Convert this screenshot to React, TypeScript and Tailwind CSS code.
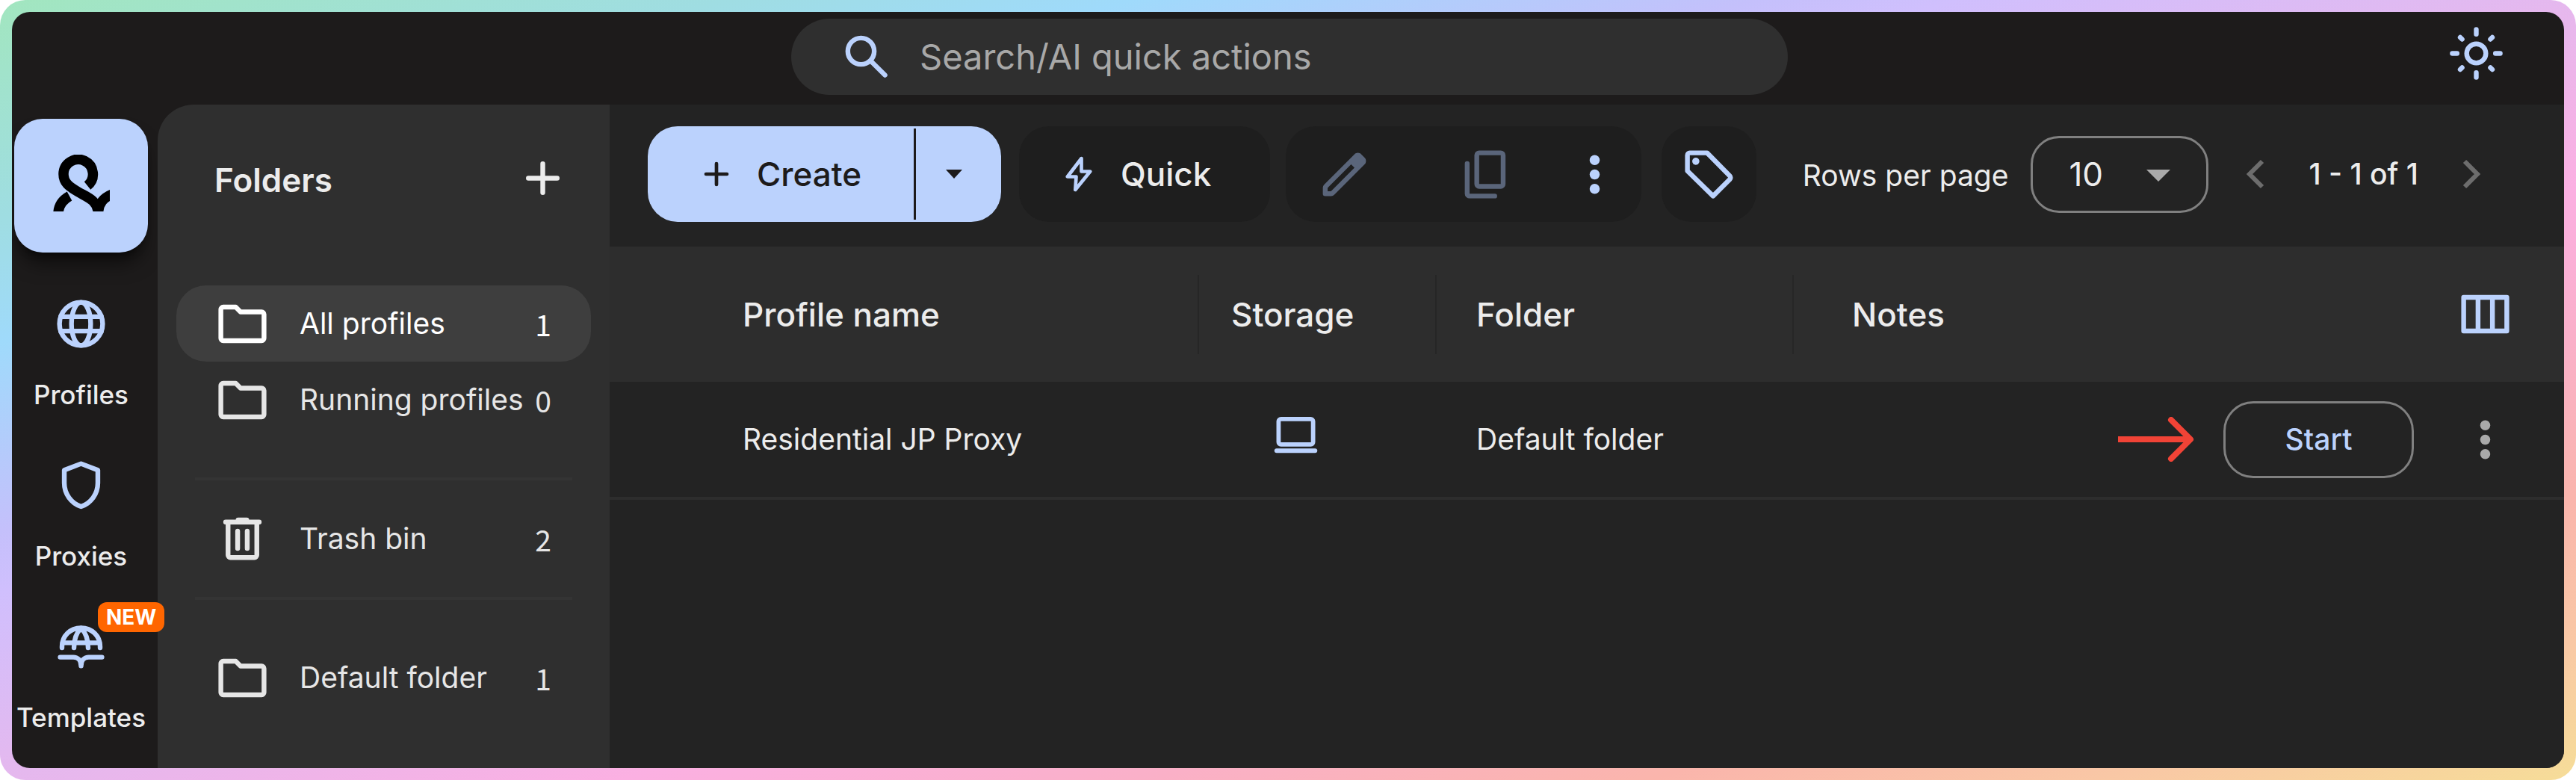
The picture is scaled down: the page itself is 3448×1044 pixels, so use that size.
import type { ReactNode } from 'react';

type IconProps = { className?: string; children: ReactNode };

// --- ICONS ---
function Icon({ className = 'size-[77px]', children }: IconProps) {
  return (
    <svg viewBox="0 0 24 24" fill="none" stroke="currentColor" strokeWidth={2} strokeLinecap="round" strokeLinejoin="round" className={`shrink-0 ${className}`} aria-hidden="true">
      {children}
    </svg>
  );
}

const FolderIcon = () => (
  <Icon><path d="M4 5h5.2l2 2H20a1 1 0 0 1 1 1v10a1 1 0 0 1-1 1H4a1 1 0 0 1-1-1V6a1 1 0 0 1 1-1z" /></Icon>
);

const TrashIcon = () => (
  <Icon><path d="M5 4.900h14M10.200 4h3.600M6 5.200v13.500a1 1 0 0 0 1 1h10a1 1 0 0 0 1-1V5.200M10 8.700v7.200M14 8.700v7.200" /></Icon>
);

const DotsIcon = () => (
  <Icon>
    <g fill="currentColor" stroke="none">
      <circle cx="12" cy="6" r="2.100" />
      <circle cx="12" cy="12" r="2.100" />
      <circle cx="12" cy="18" r="2.100" />
    </g>
  </Icon>
);

const railItems = [
  {
    title: 'Profiles',
    icon: (
      <Icon>
        <circle cx="12" cy="12" r="9" />
        <path d="M3.500 9h17M3.500 15h17" />
        <ellipse cx="12" cy="12" rx="4" ry="9" />
      </Icon>
    ),
  },
  {
    title: 'Proxies',
    icon: <Icon><path d="M12 3l7 2.700v5.400c0 4.500-2.900 8.500-7 9.800-4.100-1.300-7-5.300-7-9.800V5.700z" /></Icon>,
  },
  {
    title: 'Templates',
    isNew: true,
    icon: (
      <Icon>
        <path d="M4.050 12.500V12c0-4.500 3.450-7.800 7.950-7.800s7.950 3.300 7.950 7.800v.5M4.500 10.400h15" />
        <path d="M9.050 12.500c0-3.500 1-6.300 2.950-8.200 1.950 1.900 2.950 4.700 2.950 8.200" />
        <path d="M3.300 16.400h5.500c1.700 0 3.200 1.200 3.200 3.600 0-2.400 1.500-3.600 3.200-3.600h5.500" />
      </Icon>
    ),
  },
];

const columns = [
  { title: 'Profile name', width: 'w-[789px]', pad: 'pl-[178px]' },
  { title: 'Storage', width: 'w-[318px]', pad: 'pl-[43px]' },
  { title: 'Folder', width: 'w-[478px]', pad: 'pl-[53px]' },
];

function FolderRow({ icon, title, count, active }: { icon: ReactNode; title: string; count: number; active?: boolean }) {
  return (
    <button className={`mx-[25px] flex h-[102px] items-center rounded-[40px] pr-[53px] pl-[50px] text-[39px] ${active ? 'bg-[#3e3e3e] text-white' : 'text-[#e6e6e6]'}`}>
      {icon}
      <span className="ml-[38px] whitespace-nowrap">{title}</span>
      <span className="ml-auto font-['Noto_Sans_CJK_SC',sans-serif]">{count}</span>
    </button>
  );
}

export default function App() {
  return (
    <div className="min-h-screen bg-white font-['Inter',sans-serif] text-[#ececec]">
      <div className="flex min-h-screen rounded-[34px] bg-[linear-gradient(to_bottom_right,#a2e6bf_0%,#9fdde2_14%,#9fdafb_22%,#c4c0fb_34%,#d0bffd_38%,#e5b8ee_50%,#fbb0e2_62%,#fab0c8_72%,#fab5ac_82%,#f9c8a5_91%,#f6dd98_100%)] p-4">
        <div className="flex flex-1 flex-col overflow-hidden rounded-3xl bg-[#1d1b1b]">
          {/* Top bar */}
          <header className="grid h-[124px] shrink-0 grid-cols-[1fr_1338px_1fr] pt-[9px]">
            <label className="col-start-2 ml-1 flex h-[102px] items-center rounded-full bg-[#2f2f2f] pl-[63px]">
              <Icon className="size-[77px] text-[#bbd2fd]">
                <circle cx="9.500" cy="9.500" r="5.500" />
                <path d="M14 14l5.500 5.500" />
              </Icon>
              <input type="text" aria-label="Search" placeholder="Search/AI quick actions" className="ml-8 min-w-0 flex-1 bg-transparent text-[47px] outline-none placeholder:text-[#a8a8a8]" />
            </label>
            <button aria-label="Theme" className="mr-[79px] h-[92px] justify-self-end text-[#bbd2fd]">
              <Icon>
                <circle cx="12" cy="12" r="4" />
                <path d="M12 2v2M12 20v2M2 12h2M20 12h2M5.300 5.300l.8.8M17.900 17.900l.8.8M5.300 18.700l.8-.8M17.900 6.100l.8-.8" />
              </Icon>
            </button>
          </header>

          <div className="flex flex-1">
            {/* Rail */}
            <nav className="flex w-[195px] shrink-0 flex-col items-center pt-[19px] pr-[10px]">
              <button aria-label="Home" className="flex size-[179px] shrink-0 items-center justify-center rounded-[38px] bg-[#bbd2fd] text-black shadow-xl shadow-black/50">
                <svg viewBox="0 0 76 76" className="mb-2 size-[76px]" fill="none" stroke="currentColor" strokeWidth="13.500" aria-hidden="true">
                  <path d="M46 41.500A19.700 19.700 0 1 0 14 26C14 37 21 42.500 33 49.500 46 57 59.500 61 60.500 78" />
                  <path d="M7 78c.5-9.500 6-17.500 15-22.500M82 52C67 57 61 65 60.500 78" />
                </svg>
              </button>
              <div className="mt-[57px] flex w-full flex-col gap-[61px]">
                {railItems.map((item) => (
                  <a key={item.title} href="#" className="relative flex flex-col items-center text-[35px] font-medium">
                    <span className="h-[77px] text-[#bbd2fd]">{item.icon}</span>
                    <span className="mt-[35px] leading-[43px]">{item.title}</span>
                    {item.isNew && (
                      <span className="absolute -top-[21px] left-[115px] z-10 rounded-xl bg-[#ff6600] px-[11px] text-[28px] leading-10 font-bold text-white">NEW</span>
                    )}
                  </a>
                ))}
              </div>
            </nav>

            {/* Folders */}
            <aside className="flex w-[605px] shrink-0 flex-col rounded-tl-[48px] bg-[#2f2f2f]">
              <div className="mb-[105px] flex items-center pt-[60px] pr-[51px] pl-[76px]">
                <h2 className="pt-1 text-[44px] font-semibold">Folders</h2>
                <button aria-label="Add folder" className="ml-auto">
                  <Icon><path d="M12 6v12M6 12h12" /></Icon>
                </button>
              </div>
              <FolderRow icon={<FolderIcon />} title="All profiles" count={1} active />
              <FolderRow icon={<FolderIcon />} title="Running profiles" count={0} />
              <hr className="mx-[50px] mt-[53px] mb-[27px] border-t-4 border-[#343434]" />
              <FolderRow icon={<TrashIcon />} title="Trash bin" count={2} />
              <hr className="mx-[50px] mt-[27px] mb-[53px] border-t-4 border-[#343434]" />
              <FolderRow icon={<FolderIcon />} title="Default folder" count={1} />
            </aside>

            <main className="min-w-0 flex-1 bg-[#232323]">
              {/* Toolbar */}
              <div className="flex h-[190px] items-center pr-[112px] pb-1 pl-[51px] text-[44px] font-medium">
                <div className="flex h-32 items-center overflow-hidden rounded-[40px] bg-[#bbd2fd] text-[#1d1b1b]">
                  <button className="flex h-full w-[356px] items-center pl-[64px]">
                    <Icon className="mr-[26px] size-[56px]"><path d="M12 6v12M6 12h12" /></Icon>
                    Create
                  </button>
                  <span className="h-[122px] w-[3px] bg-[#1d1b1b]" />
                  <button aria-label="More create options" className="flex h-full w-[114px] items-center justify-center pr-3">
                    <svg viewBox="0 0 22 12" className="h-3 w-[22px]" fill="currentColor"><path d="M0 0h22L11 12z" /></svg>
                  </button>
                </div>
                <button className="ml-6 flex h-32 w-[336px] items-center rounded-[40px] bg-[#1e1e1e] pl-[52px]">
                  <Icon className="mr-[28px] size-[56px] text-[#bbd2fd]"><path d="M13.500 3L5.500 13.500h5L10 21l8.500-10.500h-5z" /></Icon>
                  Quick
                </button>
                <div className="ml-[21px] flex h-32 w-[476px] items-center justify-between rounded-[40px] bg-[#1e1e1e] pr-[24px] pl-[40px] text-[#5a657a]">
                  <button aria-label="Edit">
                    <Icon>
                      <path
                        fill="currentColor"
                        stroke="none"
                        d="M5 19h1.400l9.800-9.775L14.800 7.800 5 17.600V19Zm-1 2a1 1 0 0 1-1-1v-2.425a1.960 1.960 0 0 1 .575-1.400L16.200 3.575a2.100 2.100 0 0 1 .663-.425 2 2 0 0 1 1.525 0c.242.1.45.25.625.45L20.425 5c.2.183.346.392.437.625a2.200 2.200 0 0 1 0 1.513 1.900 1.900 0 0 1-.437.662L7.825 20.425a1.960 1.960 0 0 1-1.400.575H4Z"
                      />
                    </Icon>
                  </button>
                  <button aria-label="Copy" className="ml-[45px]">
                    <Icon>
                      <rect x="8" y="3" width="11" height="14" rx="1" />
                      <path d="M4 7.500V20a1 1 0 0 0 1 1h10.500" />
                    </Icon>
                  </button>
                  <button aria-label="More actions" className="text-[#bbd2fd]"><DotsIcon /></button>
                </div>
                <button aria-label="Tags" className="ml-[27px] flex h-32 w-[127px] items-center justify-center rounded-[40px] bg-[#1e1e1e] text-[#bbd2fd]">
                  <Icon>
                    <path d="M4 3h7.200L20.700 12.600a1 1 0 0 1 0 1.400L13.700 21 3 10.500V4a1 1 0 0 1 1-1z" />
                    <circle cx="6.500" cy="6.500" r="1.500" fill="currentColor" stroke="none" />
                  </Icon>
                </button>
                <label htmlFor="rows" className="ml-auto pt-1 text-[39px] font-normal whitespace-nowrap">Rows per page</label>
                <div className="relative ml-[30px]">
                  <select id="rows" className="block h-[103px] w-[238px] appearance-none rounded-[38px] border-[3px] border-[#808080] bg-transparent pl-[48px] text-[44px] font-normal">
                    <option>10</option>
                  </select>
                  <svg viewBox="0 0 32 16" className="pointer-events-none absolute top-[45px] right-[51px] h-4 w-8 text-[#a9a9a9]" fill="currentColor"><path d="M0 0h32L16 16z" /></svg>
                </div>
                <button aria-label="Previous page" className="ml-[51px] text-[#6d6d6d]">
                  <svg viewBox="0 0 24 40" className="h-10 w-6" fill="none" stroke="currentColor" strokeWidth="6"><path d="M21 3L4 20l17 17" /></svg>
                </button>
                <span className="mx-[59px] text-[39px] whitespace-nowrap">1 - 1 of 1</span>
                <button aria-label="Next page" className="text-[#6d6d6d]">
                  <svg viewBox="0 0 24 40" className="h-10 w-6" fill="none" stroke="currentColor" strokeWidth="6"><path d="M3 3l17 17L3 37" /></svg>
                </button>
              </div>

              {/* Profiles table */}
              <table className="w-full table-fixed border-collapse text-left">
                <thead className="bg-[#2d2d2d] text-[44px]">
                  <tr className="h-[181px]">
                    {columns.map((col) => (
                      <th key={col.title} className={`p-0 font-medium ${col.width}`}>
                        <div className={`flex h-[106px] items-center border-r-2 border-[#262626] ${col.pad}`}>{col.title}</div>
                      </th>
                    ))}
                    <th className="p-0 font-medium">
                      <div className="flex items-center pr-[67px] pl-[78px]">
                        Notes
                        <button aria-label="Columns" className="ml-auto text-[#bbd2fd]">
                          <Icon><path d="M3 5h18v14H3zM9 5v14M15 5v14" /></Icon>
                        </button>
                      </div>
                    </th>
                  </tr>
                </thead>
                <tbody className="text-[39px]">
                  <tr className="h-[156px] border-b-4 border-[#2d2d2d]">
                    <td className="p-0 pl-[178px]">Residential JP Proxy</td>
                    <td className="p-0 pl-[91px]">
                      <Icon className="size-[77px] text-[#bbd2fd]">
                        <rect x="4.800" y="3.400" width="14.400" height="10.600" rx="1" strokeWidth="1.800" />
                        <path d="M4 16.600h16" strokeWidth="1.900" />
                      </Icon>
                    </td>
                    <td className="p-0 pl-[53px]">Default folder</td>
                    <td className="p-0">
                      <div className="flex items-center justify-end pr-[67px]">
                        <svg viewBox="0 0 102 60" className="mr-[39px] h-[60px] w-[102px]" fill="none" stroke="#f14336" strokeWidth="8" strokeLinecap="round" strokeLinejoin="round" aria-hidden="true">
                          <path d="M0 30h97" strokeLinecap="butt" />
                          <path d="M71 4l26 26-26 26" />
                        </svg>
                        <button className="h-[103px] w-[255px] rounded-[40px] border-[3px] border-[#808080] font-medium text-[#bbd2fd]">Start</button>
                        <button aria-label="Row actions" className="ml-[57px] text-[#a9a9a9]"><DotsIcon /></button>
                      </div>
                    </td>
                  </tr>
                </tbody>
              </table>
            </main>
          </div>
        </div>
      </div>
    </div>
  );
}
